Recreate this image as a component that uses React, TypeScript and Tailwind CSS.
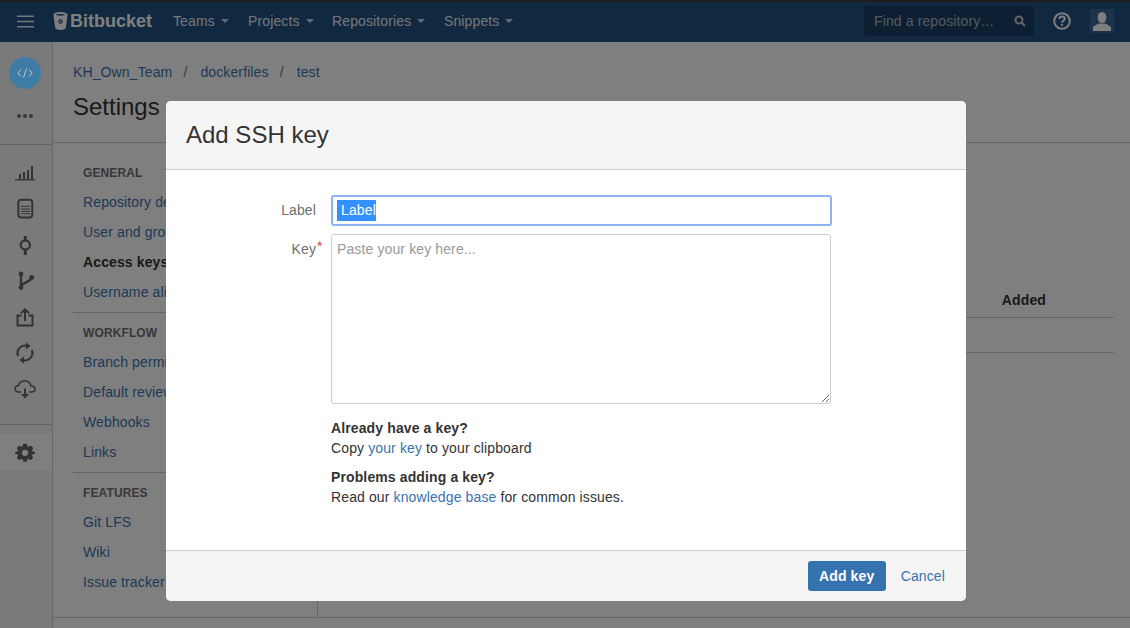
import React from "react";

const Caret = () => (
  <span className="ml-[6px] inline-block h-0 w-0 border-x-[4px] border-t-[4px] border-x-transparent border-t-[#c9d6e4]" />
);

const NavLink = ({ label, width }: { label: string; width: string }) => (
  <div className={`flex items-center text-[14px] text-[#e8eef5] ${width}`}>
    {label}
    <Caret />
  </div>
);

const SideIcon = ({ children }: { children: React.ReactNode }) => (
  <div className="flex h-[36px] w-full items-center justify-center pr-[2px]">
    <svg width="24" height="24" viewBox="0 0 24 24" fill="none" stroke="#666" strokeWidth="1.6">
      {children}
    </svg>
  </div>
);

const Heading = ({ children }: { children: React.ReactNode }) => (
  <div className="flex h-[30px] items-center pl-[10px] pt-[2px] text-[12px] font-bold uppercase text-[#707070]">{children}</div>
);

const Item = ({ children, active }: { children: React.ReactNode; active?: boolean }) => (
  <div className={`flex h-[30px] items-center whitespace-nowrap pl-[10px] text-[14px] ${active ? "font-bold text-[#333]" : "text-[#3b73af]"}`}>
    {children}
  </div>
);

const Crumb = ({ children }: { children: React.ReactNode }) => <span className="text-[#3b73af]">{children}</span>;

export default function App() {
  return (
    <div className="relative flex h-[628px] w-[1130px] flex-col overflow-hidden bg-white font-['Liberation_Sans',Arial,sans-serif] text-[14px] tracking-[0.12px] text-[#333]">
      {/* top bar */}
      <header className="flex h-[42px] shrink-0 items-center border-t-2 border-[#3d3d3d] bg-[#205081] pb-[2px] pr-[16px]">
        <svg className="ml-[17px]" width="17" height="13" viewBox="0 0 17 13" fill="none" stroke="#e8eef5" strokeWidth="1.6">
          <path d="M0 1.200h17M0 6.500h17M0 11.800h17" />
        </svg>
        <svg className="ml-[19px]" width="15" height="18" viewBox="0 0 15 18" fill="#fff">
          <path d="M0.500 2.500C0.500 1 4 0 7.500 0s7 1 7 2.500c0 1-1 9-1.800 13.200C12.400 17 10 18 7.500 18s-4.900-1-5.200-2.300C1.500 11.500 0.500 3.500 0.500 2.500z" />
          <path d="M2.500 2.800c1.200-.6 3-.9 5-.9s3.800.3 5 .9c-1.200.6-3 .9-5 .9s-3.800-.3-5-.9z" fill="#205081" />
          <circle cx="7.500" cy="9.500" r="2.200" fill="#205081" />
          <circle cx="7.500" cy="9.500" r="0.900" />
        </svg>
        <div className="ml-[2px] w-[103px] text-[18px] font-bold tracking-[0] text-white">Bitbucket</div>
        <NavLink label="Teams" width="w-[75px]" />
        <NavLink label="Projects" width="w-[84px]" />
        <NavLink label="Repositories" width="w-[112px]" />
        <NavLink label="Snippets" width="w-[100px]" />
        <div className="ml-auto flex items-center">
          <div className="flex h-[30px] w-[170px] items-center justify-between rounded-[3px] bg-[#1a4066] pl-[10px] pr-[8px] text-[14px] text-[#a9b5c2]">
            <span>Find a repository…</span>
            <svg width="12" height="12" viewBox="0 0 12 12" fill="none" stroke="#c5cdd6" strokeWidth="2">
              <circle cx="5" cy="5" r="3.500" />
              <path d="M7.500 7.500L11 11" />
            </svg>
          </div>
          <svg className="ml-[19px]" width="18" height="18" viewBox="0 0 18 18" fill="none" stroke="#fff" strokeWidth="2">
            <circle cx="9" cy="9" r="7.800" />
            <path d="M6.300 7c0-1.600 1.200-2.500 2.700-2.500s2.700.9 2.700 2.300c0 2-2.700 2-2.700 3.900" />
            <path d="M9 12v1.800" />
          </svg>
          <div className="ml-[19px] flex h-[24px] w-[24px] items-center justify-center rounded-[2px] bg-[#3a6796]">
            <svg width="20" height="20" viewBox="0 0 20 20" fill="#fff">
              <ellipse cx="10" cy="6.500" rx="4.300" ry="5.500" />
              <path d="M1 20v-3c0-2 4-3.500 6-4.500h6c2 1 6 2.500 6 4.500v3z" />
            </svg>
          </div>
        </div>
      </header>

      <div className="flex min-h-0 flex-1">
        {/* repo sidebar */}
        <aside className="flex w-[53px] shrink-0 flex-col items-center border-r border-[#ccc] bg-[#f5f5f5]">
          <div className="relative z-10 mr-[2px] mt-[15px] flex h-[32px] w-[32px] items-center justify-center rounded-full bg-[#3e7ca6]">
            <svg width="16" height="10" viewBox="0 0 16 10" fill="none" stroke="#c8c8c8" strokeWidth="1">
              <path d="M4 1.500L0.800 5 4 8.500M12 1.500L15.200 5 12 8.500M9.500 0.500L6.500 9.500" />
            </svg>
          </div>
          <div className="mr-[2px] mt-[25px] flex h-[5px] gap-[2px]">
            <span className="h-[4px] w-[4px] rounded-full bg-[#707070]" />
            <span className="h-[4px] w-[4px] rounded-full bg-[#707070]" />
            <span className="h-[4px] w-[4px] rounded-full bg-[#707070]" />
          </div>
          <div className="mt-[25px] h-px w-full bg-[#ccc]" />
          <div className="mt-[10px] flex w-full flex-col">
            <SideIcon>
              <path d="M2 18.800h20" strokeWidth="1.300" />
              <path d="M7 18.800V13M11 18.800V11M15 18.800V9M19 18.800V5" strokeWidth="2" />
            </SideIcon>
            <SideIcon>
              <rect x="5.300" y="2.800" width="14" height="17.800" rx="3" strokeWidth="2" />
              <path d="M7.700 9.300h9.600M7.700 12h9.600M7.700 14.300h9.600M7.700 16.700h9.600" strokeWidth="1" />
            </SideIcon>
            <SideIcon>
              <circle cx="12.300" cy="12" r="4.600" strokeWidth="2.200" />
              <path d="M12.300 3v5.500M12.300 15.500V22" strokeWidth="3" />
            </SideIcon>
            <SideIcon>
              <path d="M8 5v13M8 18c.2-5 9.500-4 10.700-9.500" strokeWidth="2.400" />
              <circle cx="8" cy="5" r="2.400" fill="#666" stroke="none" />
              <circle cx="8" cy="18.500" r="2.400" fill="#666" stroke="none" />
              <circle cx="18.700" cy="8.500" r="2.400" fill="#666" stroke="none" />
            </SideIcon>
            <SideIcon>
              <path d="M8.500 10.500H4.500v10h15v-10h-4" strokeWidth="2" />
              <path d="M12 16V4.500M8 8.300l4-4 4 4" strokeWidth="2" />
            </SideIcon>
            <SideIcon>
              <path d="M5.200 15A7.500 7.500 0 0 1 14 4.800M18.800 9A7.500 7.500 0 0 1 10 19.200" strokeWidth="2.200" />
              <path d="M13 1.300L17.500 5 13 8.500zM11 15.500L6.500 19 11 22.700z" fill="#666" stroke="none" />
            </SideIcon>
            <SideIcon>
              <path
                d="M8 15H5.500C3.500 15 2 13.500 2 11.800 2 10 3.500 8.600 5.500 8.500 6.300 5.500 9 4 11.800 4c3 0 5.400 2 6 4.700 2.300 0 4.200 1.500 4.200 3.300s-1.700 3-3.500 3H16"
                strokeWidth="1.600"
              />
              <path d="M12 11.500v6" strokeWidth="2" />
              <path d="M8 17h8l-4 4.500z" fill="#666" stroke="none" />
            </SideIcon>
          </div>
          <div className="mt-[17px] h-px w-full bg-[#ccc]" />
          <div className="mt-[9px] flex h-[36px] w-full items-center justify-center bg-white pr-[2px]">
            <svg width="20" height="20" viewBox="0 0 20 20" fill="#666">
              <path
                fillRule="evenodd"
                d="M8 1h4l.5 2.500 1.700.7 2.200-1.400 2.800 2.800-1.400 2.200.7 1.700L21 10v0l0 2-2.500.5-.7 1.700 1.400 2.200-2.800 2.800-2.200-1.400-1.700.7L12 21H8l-.5-2.500-1.700-.7-2.200 1.400-2.800-2.800 1.400-2.200-.7-1.700L-1 12v-2l2.500-.5.7-1.700-1.400-2.200 2.800-2.800 2.200 1.400 1.700-.7zM10 7.500a3.500 3.500 0 1 0 0 7 3.500 3.500 0 0 0 0-7z"
                transform="translate(1 0.900) scale(0.9)"
              />
            </svg>
          </div>
        </aside>

        <main className="flex min-w-0 flex-1 flex-col">
          <div className="h-[100px] shrink-0 pl-[20px]">
            <div className="mt-[16px] flex h-[28px] items-center text-[14px]">
              <Crumb>KH_Own_Team</Crumb>
              <span className="mx-[11px] pr-[2px] text-[#707070]">/</span>
              <Crumb>dockerfiles</Crumb>
              <span className="mx-[11px] pr-[2px] text-[#707070]">/</span>
              <Crumb>test</Crumb>
            </div>
            <h1 className="mt-[6px] text-[24px] leading-[30px] tracking-[0] text-[#333]">Settings</h1>
          </div>

          <div className="flex min-h-0 flex-1 border-t border-[#ccc] pl-[20px] pr-[16px]">
            <nav className="h-[475px] w-[245px] shrink-0 border-r border-[#ccc] pt-[14px]">
              <Heading>General</Heading>
              <Item>Repository details</Item>
              <Item>User and group access</Item>
              <Item active>Access keys</Item>
              <Item>Username aliases</Item>
              <div className="mb-[4px] mt-[5px] h-px bg-[#ccc]" />
              <Heading>Workflow</Heading>
              <Item>Branch permissions</Item>
              <Item>Default reviewers</Item>
              <Item>Webhooks</Item>
              <Item>Links</Item>
              <div className="mb-[4px] mt-[5px] h-px bg-[#ccc]" />
              <Heading>Features</Heading>
              <Item>Git LFS</Item>
              <Item>Wiki</Item>
              <Item>Issue tracker</Item>
            </nav>
            <div className="flex-1 pt-[148px]">
              <div className="flex h-[27px] items-center justify-end border-b border-[#ccc] pb-[8px] pr-[68px] text-[14px] font-bold text-[#333]">
                Added
              </div>
              <div className="h-[35px] border-b border-[#ccc]" />
            </div>
          </div>
          <div className="h-[11px] shrink-0 border-t border-[#ccc]" />
        </main>
      </div>

      {/* dialog */}
      <div className="absolute inset-0 bg-black/50" />
      <div className="absolute left-[166px] top-[101px] z-20 flex h-[500px] w-[800px] flex-col overflow-hidden rounded-[5px] bg-white">
        <div className="flex h-[69px] shrink-0 items-center border-b border-[#ccc] bg-[#f5f5f5] pl-[20px] text-[24px] tracking-[0] text-[#333]">
          Add SSH key
        </div>
        <div className="flex-1 pl-[165px] pt-[25px]">
          <div className="flex items-center">
            <div className="absolute left-0 w-[150px] text-right text-[14px] text-[#707070]">Label</div>
            <div className="flex h-[31px] w-[501px] items-center rounded-[3px] border-2 border-[#8db3ee] pl-[4px] text-[14px]">
              <span className="whitespace-pre bg-[#3390ff] text-white"> Label</span>
            </div>
          </div>
          <div className="mt-[8px] flex">
            <div className="absolute left-0 mt-[7px] w-[150px] text-right text-[14px] leading-[17px] text-[#707070]">
              Key<span className="absolute ml-[1px] mt-[-3px] text-[#d04437]">*</span>
            </div>
            <div className="relative h-[170px] w-[500px] rounded-[3px] border border-[#ccc] pl-[5px] pt-[4px] text-[14px] leading-[20px] text-[#999]">
              Paste your key here...
              <svg className="absolute bottom-0 right-0" width="9" height="9" viewBox="0 0 9 9" stroke="#666" strokeWidth="1">
                <path d="M1 8l7-7M5 8l3-3" />
              </svg>
            </div>
          </div>
          <p className="mt-[14px] text-[14px] font-bold leading-[20px] text-[#333]">Already have a key?</p>
          <p className="text-[14px] leading-[20px] text-[#333]">
            Copy <span className="text-[#3b73af]">your key</span> to your clipboard
          </p>
          <p className="mt-[9px] text-[14px] font-bold leading-[20px] text-[#333]">Problems adding a key?</p>
          <p className="text-[14px] leading-[20px] text-[#333]">
            Read our <span className="text-[#3b73af]">knowledge base</span> for common issues.
          </p>
        </div>
        <div className="flex h-[51px] shrink-0 items-center justify-end gap-[15px] border-t border-[#ccc] bg-[#f5f5f5] pr-[21px]">
          <div className="flex h-[30px] w-[78px] items-center justify-center rounded-[3px] bg-[#3572b0] text-[14px] font-bold text-white">
            Add key
          </div>
          <span className="text-[14px] text-[#3b73af]">Cancel</span>
        </div>
      </div>
    </div>
  );
}
